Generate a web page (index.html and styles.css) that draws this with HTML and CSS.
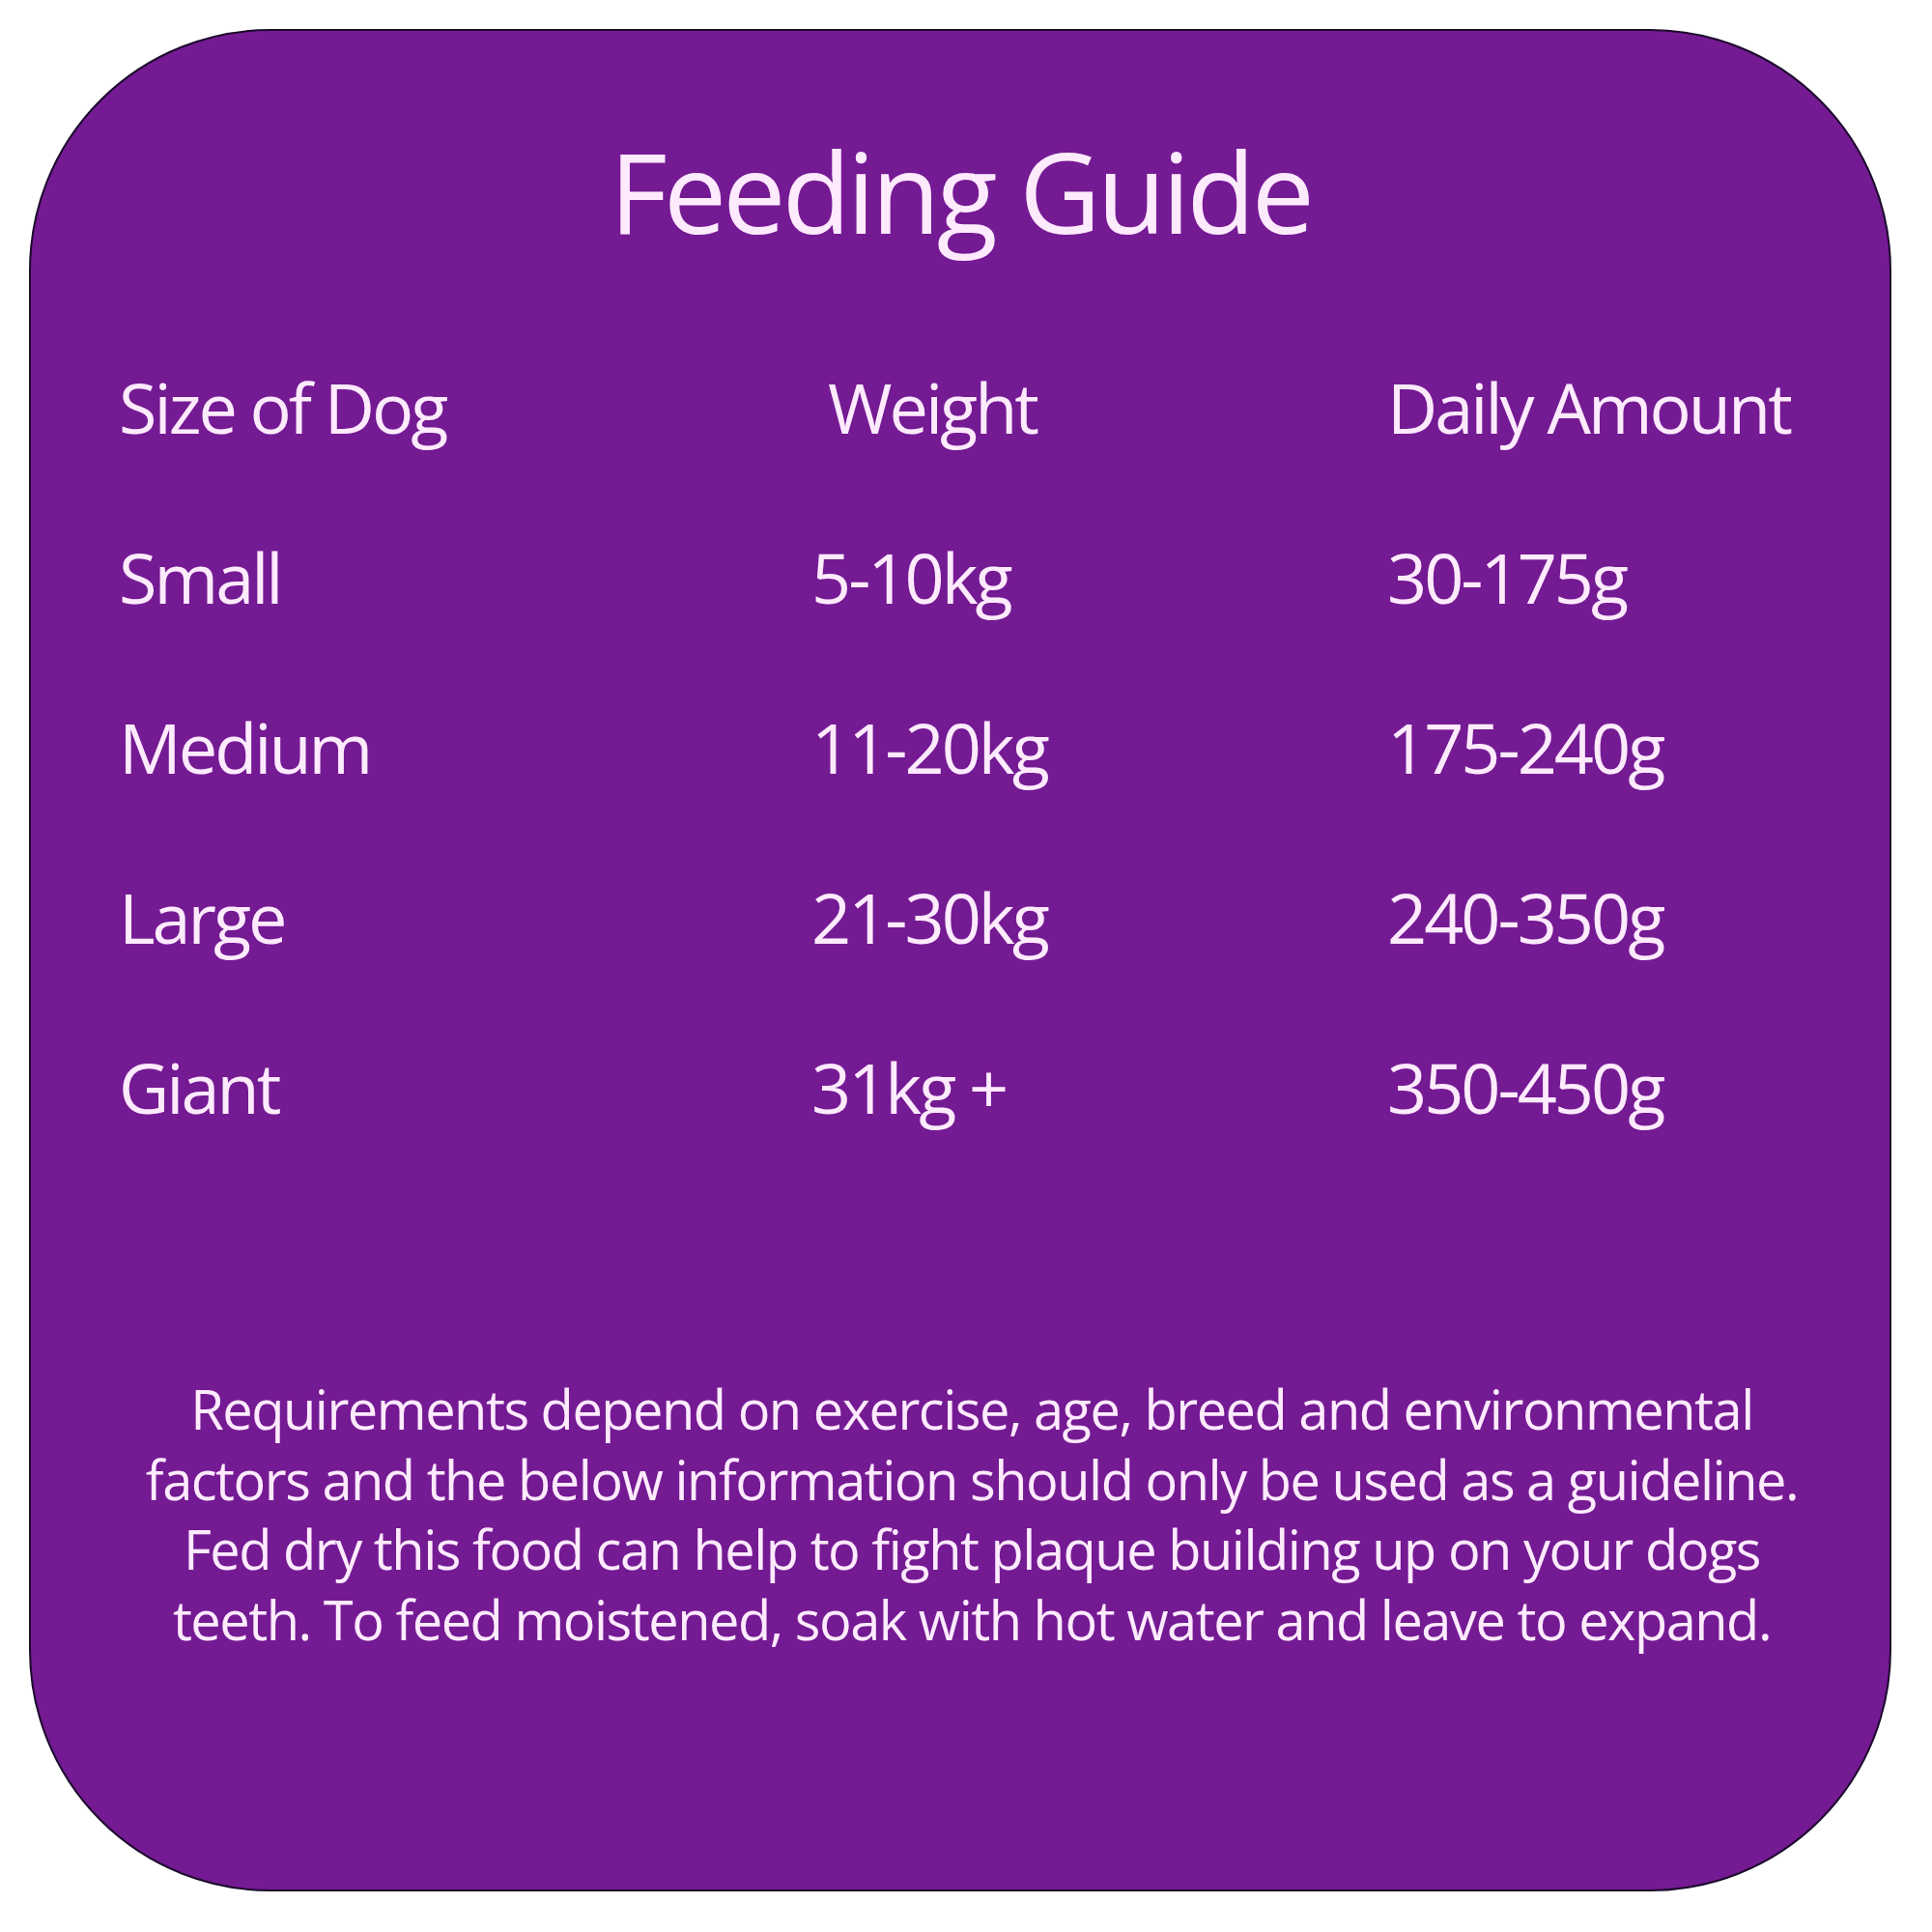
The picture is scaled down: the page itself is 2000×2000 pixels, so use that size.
FILE: index.html
```html
<!DOCTYPE html>
<html>
<head>
<meta charset="utf-8">
<link rel="stylesheet" href="styles.css">
</head>
<body>
<div class="card">
  <h1 class="title">Feeding Guide</h1>
  <div class="table">
    <div class="cell">Size of Dog</div><div class="cell head-weight">Weight</div><div class="cell">Daily Amount</div>
    <div class="cell">Small</div><div class="cell">5-10kg</div><div class="cell">30-175g</div>
    <div class="cell">Medium</div><div class="cell">11-20kg</div><div class="cell">175-240g</div>
    <div class="cell">Large</div><div class="cell">21-30kg</div><div class="cell">240-350g</div>
    <div class="cell">Giant</div><div class="cell">31kg +</div><div class="cell">350-450g</div>
  </div>
  <p class="note">Requirements depend on exercise, age, breed and environmental<br>factors and the below information should only be used as a guideline.<br>Fed dry this food can help to fight plaque building up on your dogs<br>teeth. To feed moistened, soak with hot water and leave to expand.</p>
</div>
</body>
</html>
```
FILE: styles.css
```css
html, body {
  margin: 0;
  padding: 0;
  background: #ffffff;
}
body {
  width: 2000px;
  height: 2000px;
  font-family: "Open Sans", "Liberation Sans", sans-serif;
}
.card {
  box-sizing: border-box;
  margin: 30px 0 0 30px;
  width: 1928px;
  height: 1928px;
  background: #741a93;
  border: 2px solid #1c0a2c;
  border-radius: 250px;
  color: #fdeafd;
  display: flex;
  flex-direction: column;
  padding-top: 96px;
}
.title {
  margin: 0;
  font-weight: 400;
  font-size: 116px;
  line-height: 139px;
  text-align: center;
  letter-spacing: -3.8px;
}
.table {
  margin-top: 66px;
  margin-left: 91px;
  display: grid;
  grid-template-columns: 717px 596px auto;
  grid-auto-rows: 176px;
}
.cell {
  font-size: 72px;
  line-height: 176px;
  letter-spacing: -3px;
  white-space: nowrap;
}
.head-weight {
  padding-left: 17px;
}
.note {
  margin: 209px 0 0 0;
  padding-left: 24px;
  font-size: 56px;
  line-height: 72.5px;
  text-align: center;
  letter-spacing: -1.5px;
  white-space: nowrap;
}
```
